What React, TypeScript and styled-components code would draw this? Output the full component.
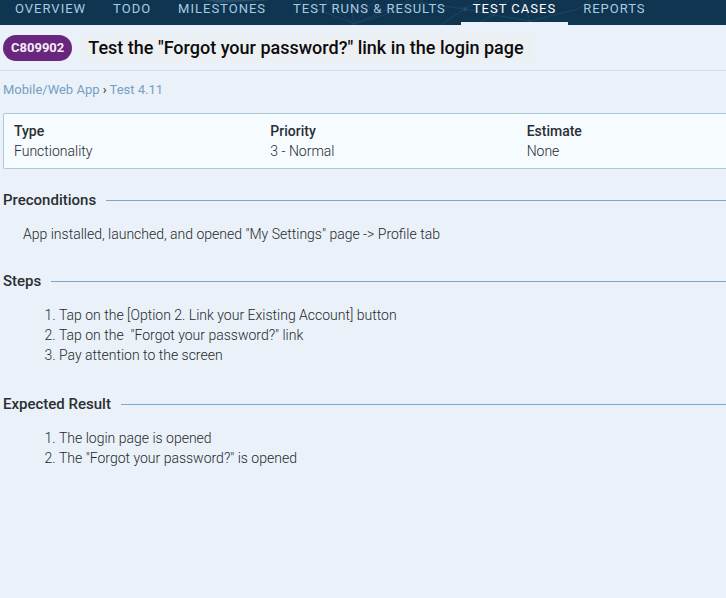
import React from "react";
import styled, { createGlobalStyle } from "styled-components";

const GlobalStyle = createGlobalStyle`
  * { box-sizing: border-box; }
  body {
    margin: 0;
    background: #eaf1f8;
    color: #24292e;
    font: 300 14px/20px Roboto, "Liberation Sans", sans-serif;
    overflow-x: hidden;
  }
`;

const Header = styled.header`
  display: grid;
  height: 25px;
  overflow: hidden;
  background: #0f3551;
  & > * { grid-area: 1 / 1; }
`;

const Constellation = styled.svg`
  width: 726px;
  height: 25px;
  fill: #28506d;
  stroke: #1d4562;
`;

const Nav = styled.nav`
  display: flex;
  gap: 3px;
  padding-left: 3px;
  z-index: 1;
`;

const Tab = styled.a<{ $active?: boolean }>`
  flex: none;
  height: 25px;
  padding: 0 12px;
  border-bottom: 3px solid ${(p) => (p.$active ? "#eaf1f8" : "transparent")};
  color: ${(p) => (p.$active ? "#ffffff" : "#a9cbe0")};
  font-size: 13px;
  font-weight: 400;
  line-height: 17px;
  letter-spacing: 1px;
  text-decoration: none;
  text-transform: uppercase;
  white-space: nowrap;
`;

const TitleBar = styled.div`
  display: flex;
  align-items: center;
  gap: 8px;
  height: 46px;
  padding-left: 3px;
  border-bottom: 1px solid #cfdfea;
`;

const CaseId = styled.span`
  flex: none;
  padding: 0 8px;
  border-radius: 13px;
  background: #68267d;
  color: #f5edf7;
  font-size: 13px;
  font-weight: 700;
  line-height: 26px;
`;

const Title = styled.h1`
  margin: 0;
  padding: 0 8px;
  background: #edf0f3;
  color: #0b0b0d;
  font-size: 18px;
  font-weight: 500;
  line-height: 26px;
  white-space: nowrap;
`;

const Main = styled.main`
  padding-left: 3px;
`;

const Breadcrumb = styled.nav`
  padding: 9px 0 13px;
  font-size: 13px;
  font-weight: 400;
`;

const Crumb = styled.a`
  color: #74a0c6;
  text-decoration: none;
`;

const Properties = styled.dl`
  display: grid;
  grid-template-columns: 36% 36% 1fr;
  margin: 0;
  padding: 8px 0 7px 10px;
  border: 1px solid #a9cbdb;
  border-right: 0;
  border-radius: 2px 0 0 2px;
  background: #f6fbff;
`;

const Label = styled.dt`
  color: #2b2f33;
  font-weight: 500;
  line-height: 19px;
`;

const Value = styled.dd`
  margin: 0;
`;

const Section = styled.section`
  margin-top: 21px;
`;

const SectionTitle = styled.h2`
  display: flex;
  align-items: center;
  gap: 10px;
  margin: 0;
  color: #2b2f33;
  font-size: 15px;
  font-weight: 500;
  line-height: 20px;
  &::after {
    content: "";
    flex: 1;
    height: 1px;
    background: #76a9ce;
  }
`;

const Paragraph = styled.p`
  margin: 0;
  padding: 14px 20px 6px;
`;

const StepList = styled.ol`
  margin: 0;
  padding: 14px 20px 8px 56px;
`;

const Step = styled.li`
  white-space: pre-wrap;
`;

const tabs = ["Overview", "Todo", "Milestones", "Test Runs & Results", "Test Cases", "Reports"];

const properties = [
  ["Type", "Functionality"],
  ["Priority", "3 - Normal"],
  ["Estimate", "None"],
];

const steps = [
  "Tap on the [Option 2. Link your Existing Account] button",
  "Tap on the  \"Forgot your password?\" link",
  "Pay attention to the screen",
];

const results = ["The login page is opened", "The \"Forgot your password?\" is opened"];

export default function App() {
  return (
    <>
      <GlobalStyle />
      <Header>
        <Constellation viewBox="0 0 726 25" aria-hidden="true">
          <path d="M205 0l14 3 L268 0M295 0l59 24M325 0l29 24M350 0l4 24M375 0l-21 24M410 0l-56 24M354 24L422 3M422 3l43 6M465 9L440 25M465 9L480 0M465 9l29 6M494 15l36 6M494 15l-19 10M494 15l14-15M530 21l-8-21M530 21l48-12M578 9L590 0" />
          <circle cx="354" cy="24" r="1" />
          <circle cx="422" cy="3" r="1" />
          <circle cx="465" cy="9" r="2" />
          <circle cx="494" cy="15" r="1" />
          <circle cx="530" cy="21" r="1" />
        </Constellation>
        <Nav aria-label="Project">
          {tabs.map((tab) => (
            <Tab key={tab} href="#" $active={tab === "Test Cases"}>{tab}</Tab>
          ))}
        </Nav>
      </Header>
      <TitleBar>
        <CaseId>C809902</CaseId>
        <Title>Test the "Forgot your password?" link in the login page</Title>
      </TitleBar>
      <Main>
        <Breadcrumb aria-label="Breadcrumb">
          <Crumb href="#">Mobile/Web App</Crumb> › <Crumb href="#">Test 4.11</Crumb>
        </Breadcrumb>
        <Properties>
          {properties.map(([label, value]) => (
            <div key={label}>
              <Label>{label}</Label>
              <Value>{value}</Value>
            </div>
          ))}
        </Properties>
        <Section>
          <SectionTitle>Preconditions</SectionTitle>
          <Paragraph>App installed, launched, and opened "My Settings" page -&gt; Profile tab</Paragraph>
        </Section>
        <Section>
          <SectionTitle>Steps</SectionTitle>
          <StepList>{steps.map((s) => <Step key={s}>{s}</Step>)}</StepList>
        </Section>
        <Section>
          <SectionTitle>Expected Result</SectionTitle>
          <StepList>{results.map((s) => <Step key={s}>{s}</Step>)}</StepList>
        </Section>
      </Main>
    </>
  );
}
